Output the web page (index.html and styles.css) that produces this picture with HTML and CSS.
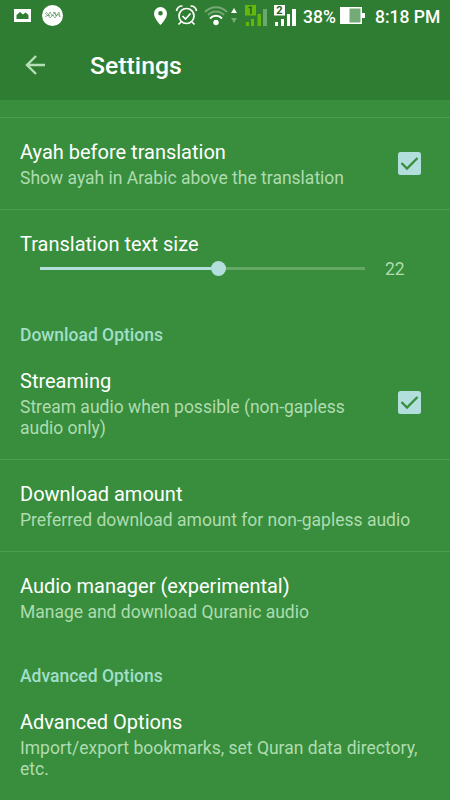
FILE: index.html
```html
<!DOCTYPE html>
<html lang="en">
<head>
    <meta charset="UTF-8">
    <meta name="viewport" content="width=device-width, initial-scale=1.0">
    <title>Settings</title>
    <link rel="stylesheet" href="styles.css">
</head>
<body>
    <header>
        <div class="status">
            <svg class="status-icons" width="300" height="34" viewBox="0 0 300 34">
                <!-- picture -->
                <path fill="#fff" fill-rule="evenodd" d="M14 9h17v13H14zM16.500 19h12v-4l-3-2.500-2.500 2-3-2.500-3.500 3z"/>
                <!-- app badge -->
                <circle cx="52.500" cy="15.500" r="10.500" fill="#fff"/>
                <path fill="none" stroke="#47884a" stroke-width=".6" d="M45 13l3 3 2-4 2 4 3-4 1 4 3-4 1 5M45 17l3-2 2 3 3-3 2 3 3-4 2 3M46 12l4 4M53 12l4 4"/>
                <!-- location -->
                <path fill="#fff" fill-rule="evenodd" d="M160.500 7a6.500 6.500 0 0 0-6.500 6.500c0 5 6.500 11.500 6.500 11.500s6.500-6.500 6.500-11.500A6.500 6.500 0 0 0 160.500 7zm0 4a2.300 2.300 0 1 1 0 4.600 2.300 2.300 0 0 1 0-4.600z"/>
                <!-- alarm -->
                <g fill="none" stroke="#fff" stroke-width="1.700">
                    <circle cx="186.500" cy="16" r="7.500"/>
                    <path d="M182.500 16l3 3 5-5.500M176.500 11c.5-3 3-5 6-5M196.500 11c-.5-3-3-5-6-5M181 22l-2.500 2.500M192 22l2.500 2.500"/>
                </g>
                <!-- wifi -->
                <g fill="none" stroke="#73aa75" stroke-width="2">
                    <path d="M205 12c6-6.500 16-6.500 22 0"/>
                    <path d="M208 15c4.500-4.700 11.500-4.700 16 0"/>
                    <path stroke="#fff" d="M210 18.500c3.300-3.700 8.700-3.700 12 0"/>
                </g>
                <circle cx="216" cy="22.500" r="2.700" fill="#fff"/>
                <path fill="#fff" d="M231 13h6l-3-5z"/>
                <path fill="#73aa75" d="M231 18h6l-3 5z"/>
                <!-- sim 1 -->
                <path fill="#64b80c" d="M245 5h11v10.500h-11zM246 22h3v4h-3zM251 19h3v7h-3zM257.500 14h3.500v12h-3.500z"/>
                <path fill="#6ba86d" d="M263 9h4v17h-4z"/>
                <!-- sim 2 -->
                <path fill="#fff" d="M274 5h11v10.500h-11zM275 22h3v4h-3zM281 19h3v7h-3zM287 14h3v12h-3zM292 9h4v17h-4z"/>
                <text x="250.500" y="14" class="sim">1</text>
                <text x="279.500" y="14" class="sim">2</text>
            </svg>
            <span class="percent">38%</span>
            <svg class="battery" width="25" height="18" viewBox="0 0 25 18">
                <path fill="#fff" d="M0 0h22v6h3v5h-3v6H0z"/>
                <path fill="#73aa75" d="M9.500 1.500h11v14h-11z"/>
            </svg>
            <span class="clock">8:18 PM</span>
        </div>
        <div class="toolbar">
            <svg width="20" height="20" viewBox="0 0 20 20">
                <path fill="none" stroke="#b4dfb6" stroke-width="2.400" d="M20 10H2M11 1l-9 9 9 9"/>
            </svg>
            <h1>Settings</h1>
        </div>
    </header>

    <main>
        <div class="row clipped"></div>
        <div class="row">
            <div class="text">
                <h2>Ayah before translation</h2>
                <p>Show ayah in Arabic above the translation</p>
            </div>
            <svg class="check" width="23" height="23" viewBox="0 0 23 23">
                <rect width="23" height="23" rx="2.500" fill="#b2dfdb"/>
                <path fill="none" stroke="#388e3c" stroke-width="2.300" d="M3.500 11l5.500 5.500L19.500 6"/>
            </svg>
        </div>
        <div class="row size">
            <h2>Translation text size</h2>
            <div class="seek">
                <div class="track"><div class="fill"></div><div class="thumb"></div></div>
                <span>22</span>
            </div>
        </div>

        <h3>Download Options</h3>
        <div class="row">
            <div class="text">
                <h2>Streaming</h2>
                <p>Stream audio when possible (non-gapless<br>audio only)</p>
            </div>
            <svg class="check" width="23" height="23" viewBox="0 0 23 23">
                <rect width="23" height="23" rx="2.500" fill="#b2dfdb"/>
                <path fill="none" stroke="#388e3c" stroke-width="2.300" d="M3.500 11l5.500 5.500L19.500 6"/>
            </svg>
        </div>
        <div class="row">
            <div class="text">
                <h2>Download amount</h2>
                <p>Preferred download amount for non-gapless audio</p>
            </div>
        </div>
        <div class="row last">
            <div class="text">
                <h2>Audio manager (experimental)</h2>
                <p>Manage and download Quranic audio</p>
            </div>
        </div>

        <h3>Advanced Options</h3>
        <div class="row last">
            <div class="text">
                <h2>Advanced Options</h2>
                <p>Import/export bookmarks, set Quran data directory,<br>etc.</p>
            </div>
        </div>
    </main>
</body>
</html>
```
FILE: styles.css
```css
* {
    box-sizing: border-box;
}
body {
    margin: 0;
    height: 800px;
    overflow: hidden;
    background-color: #388e3c;
    color: white;
    font-family: Roboto, sans-serif;
}
h1, h2, h3, p {
    margin: 0;
}
header {
    height: 100px;
    background-color: #2e7d32;
}
.status {
    display: flex;
    height: 34px;
    font-size: 17.5px;
    font-weight: 500;
    line-height: 34px;
}
.status-icons {
    flex: none;
}
.sim {
    font-size: 11px;
    font-weight: 700;
    text-anchor: middle;
    fill: #1f6523;
}
.percent {
    width: 40px;
    padding-left: 3px;
    white-space: nowrap;
}
.battery {
    margin-top: 7px;
}
.clock {
    margin-left: 10px;
    white-space: nowrap;
}
.toolbar {
    display: flex;
    align-items: center;
    height: 62px;
    padding-left: 25px;
}
.toolbar h1 {
    padding-top: 1px;
    margin-left: 45px;
    font-size: 24.8px;
    font-weight: 500;
}
.row {
    display: flex;
    align-items: center;
    justify-content: space-between;
    padding: 20px 29px 20.5px 20px;
    border-bottom: 1px solid #4b9e4f;
}
.row.clipped {
    height: 18px;
    padding: 0;
}
.row.last {
    padding-bottom: 24px;
    border-bottom: none;
}
.text {
    flex: none;
}
h2 {
    font-size: 20px;
    font-weight: 400;
    line-height: 29px;
}
.row p {
    padding-top: 1px;
    font-size: 17.5px;
    line-height: 20.5px;
    color: #afdcb0;
    white-space: nowrap;
}
.check {
    flex: none;
}
.row.size {
    display: block;
    height: 95px;
    border-bottom: none;
}
.seek {
    display: flex;
    align-items: center;
    height: 18px;
    padding-left: 20px;
}
.seek span {
    margin-left: 20px;
    padding-top: 2px;
    font-size: 17.5px;
    color: #afdcb0;
}
.track {
    display: flex;
    align-items: center;
    width: 325px;
    height: 3px;
    background-color: #64a866;
}
.fill {
    width: 171px;
    height: 3px;
    background-color: #b2dfdb;
}
.thumb {
    width: 15px;
    height: 15px;
    border-radius: 50%;
    background-color: #b2dfdb;
}
h3 {
    padding: 20px 20px 1px;
    font-size: 17.5px;
    font-weight: 500;
    line-height: 21px;
    color: #a2dfc9;
}
```
